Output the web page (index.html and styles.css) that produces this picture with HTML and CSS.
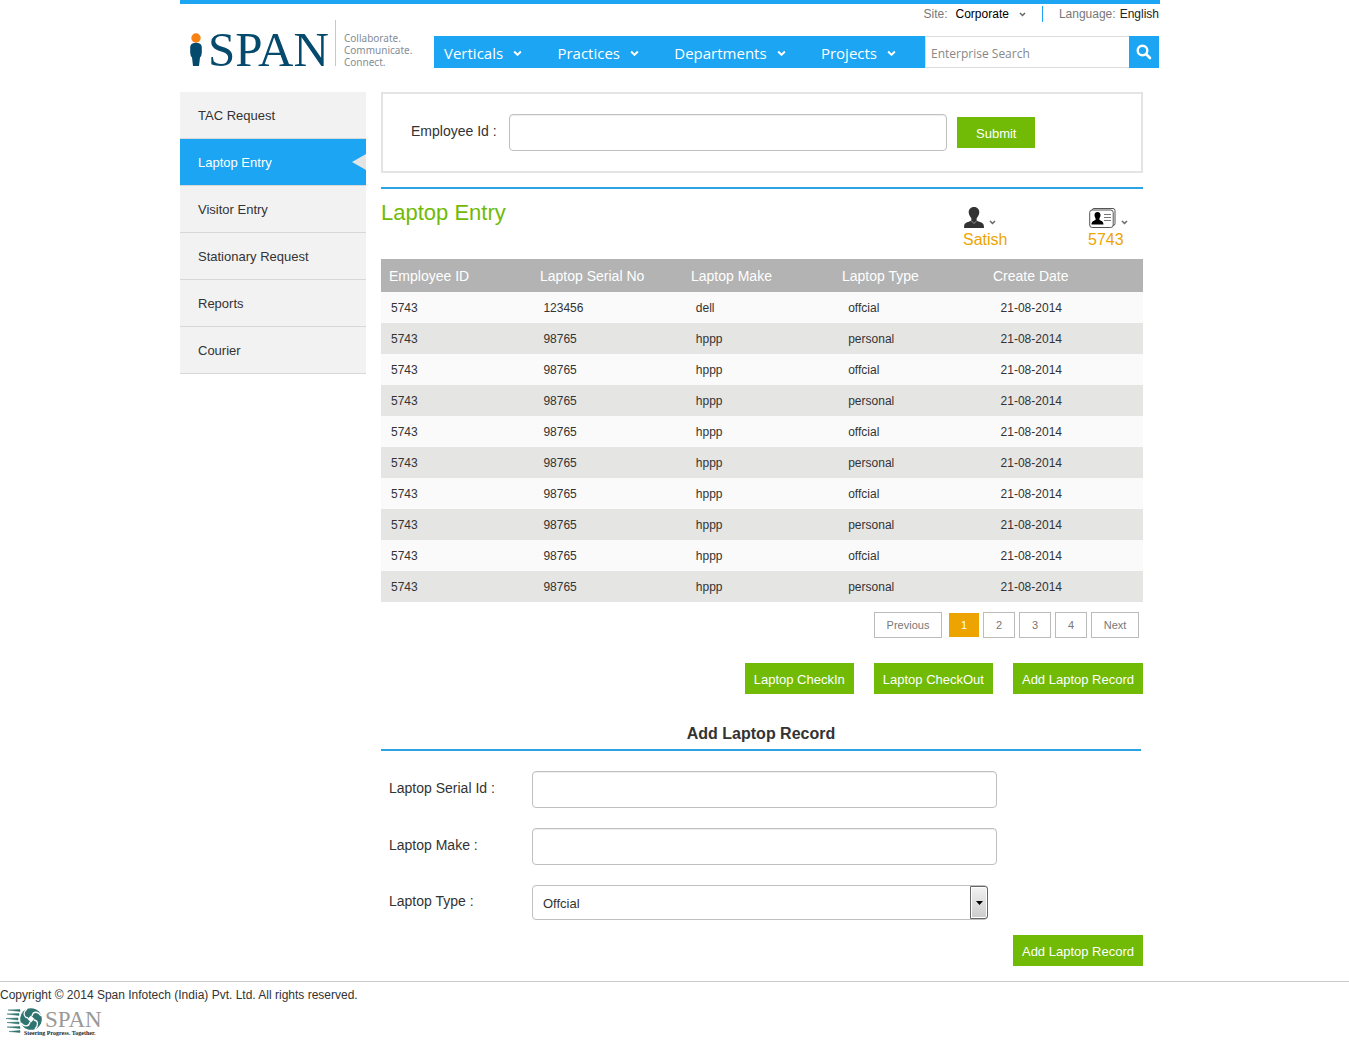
FILE: index.html
```html
<!DOCTYPE html>
<html lang="en">
<head>
<meta charset="utf-8">
<meta name="viewport" content="width=device-width, initial-scale=1">
<title>Laptop Entry</title>
<link rel="stylesheet" href="styles.css">
</head>
<body>
<svg class="defs" aria-hidden="true">
  <symbol id="caret" viewBox="0 0 8 6"><path d="M1 1.2 4 4.2 7 1.2" fill="none" stroke="currentColor" stroke-width="1.800"/></symbol>
</svg>
<div class="page">
  <header class="header">
    <a class="brand" href="#">
      <svg class="brand-man" viewBox="0 0 12 34" aria-hidden="true">
        <circle cx="6" cy="5" r="4.7" fill="#f98012"/>
        <path d="M3 10.300Q6 9 9 10.300Q12 11.500 11.800 15V20Q11.600 23 10 24.500L9 33H3L2 24.500Q.4 23 .2 20V15Q0 11.500 3 10.300Z" fill="#05496d"/>
      </svg>
      <span class="brand-name">SPAN</span>
      <span class="brand-motto">Collaborate.<br>Communicate.<br>Connect.</span>
    </a>
    <div class="header-main">
      <div class="settings">
        <span>Site:</span>
        <button class="site" type="button">Corporate <svg class="caret-small"><use href="#caret"/></svg></button>
        <span class="language">Language: <a href="#">English</a></span>
      </div>
      <div class="bar">
        <nav class="nav">
          <a href="#">Verticals <svg class="caret"><use href="#caret"/></svg></a>
          <a href="#">Practices <svg class="caret"><use href="#caret"/></svg></a>
          <a href="#">Departments <svg class="caret"><use href="#caret"/></svg></a>
          <a href="#">Projects <svg class="caret"><use href="#caret"/></svg></a>
        </nav>
        <form class="search">
          <input type="text" placeholder="Enterprise Search" aria-label="Enterprise Search">
          <button type="button" aria-label="Search"><svg viewBox="0 0 16 16"><circle cx="6.500" cy="6.500" r="4.800" fill="none" stroke="#fff" stroke-width="2.400"/><path d="m10 10 4 4" stroke="#fff" stroke-width="2.600" stroke-linecap="round"/></svg></button>
        </form>
      </div>
    </div>
  </header>

  <div class="columns">
    <nav class="side">
      <a href="#">TAC Request</a>
      <a href="#" class="active" aria-current="page">Laptop Entry</a>
      <a href="#">Visitor Entry</a>
      <a href="#">Stationary Request</a>
      <a href="#">Reports</a>
      <a href="#">Courier</a>
    </nav>

    <main class="main">
      <form class="lookup">
        <label for="employee">Employee Id :</label>
        <input id="employee" class="field" type="text">
        <button class="btn btn-wide" type="button">Submit</button>
      </form>

      <section class="title-row">
        <h1>Laptop Entry</h1>
        <a class="who" href="#">
          <span class="who-icon">
            <svg width="22" height="22" viewBox="0 0 22 22"><path d="M11 0C14.500 0 16.500 2.500 16.300 5.800C16 8.500 14.500 10 13.600 11.500V13.500C16 15 20.500 15.300 20.800 18.500L21 21H1L1.200 18.500C1.500 15.300 6 15 8.400 13.500V11.500C7.500 10 6 8.500 5.700 5.800C5.500 2.500 7.500 0 11 0Z" fill="#333"/><path d="m8.500 14 2.500 2.500 2.500-2.500" fill="none" stroke="#aaa" stroke-width=".8"/></svg>
            <svg class="caret-small"><use href="#caret"/></svg>
          </span>
          Satish
        </a>
        <a class="who" href="#">
          <span class="who-icon">
            <svg width="29" height="22" viewBox="0 0 29 22"><rect x="4" y="1.500" width="23" height="17" rx="2" fill="#fff" stroke="#555"/><rect x="1.700" y="3" width="23.500" height="17.500" rx="2.500" fill="#fff" stroke="#555"/><path d="M9.500 5C11.500 5 12.700 6.300 12.500 8.500C12.300 10.300 11.300 11 11.300 12.500C12 14 15.500 13.500 15.500 17.500H3.500C3.500 13.500 7 14 7.700 12.500C7.700 11 6.700 10.300 6.500 8.500C6.300 6.300 7.500 5 9.500 5Z" fill="#000"/><path d="M16 7.500h7M16 10.500h7M16 13.500h7" stroke="#777"/></svg>
            <svg class="caret-small"><use href="#caret"/></svg>
          </span>
          5743
        </a>
      </section>

      <table class="records">
        <thead><tr><th>Employee ID</th><th>Laptop Serial No</th><th>Laptop Make</th><th>Laptop Type</th><th>Create Date</th></tr></thead>
        <tbody>
          <tr><td>5743</td><td>123456</td><td>dell</td><td>offcial</td><td>21-08-2014</td></tr>
          <tr><td>5743</td><td>98765</td><td>hppp</td><td>personal</td><td>21-08-2014</td></tr>
          <tr><td>5743</td><td>98765</td><td>hppp</td><td>offcial</td><td>21-08-2014</td></tr>
          <tr><td>5743</td><td>98765</td><td>hppp</td><td>personal</td><td>21-08-2014</td></tr>
          <tr><td>5743</td><td>98765</td><td>hppp</td><td>offcial</td><td>21-08-2014</td></tr>
          <tr><td>5743</td><td>98765</td><td>hppp</td><td>personal</td><td>21-08-2014</td></tr>
          <tr><td>5743</td><td>98765</td><td>hppp</td><td>offcial</td><td>21-08-2014</td></tr>
          <tr><td>5743</td><td>98765</td><td>hppp</td><td>personal</td><td>21-08-2014</td></tr>
          <tr><td>5743</td><td>98765</td><td>hppp</td><td>offcial</td><td>21-08-2014</td></tr>
          <tr><td>5743</td><td>98765</td><td>hppp</td><td>personal</td><td>21-08-2014</td></tr>
        </tbody>
      </table>

      <nav class="pager" aria-label="Pages">
        <a class="prev" href="#">Previous</a>
        <a class="current" href="#" aria-current="page">1</a>
        <a href="#">2</a>
        <a href="#">3</a>
        <a href="#">4</a>
        <a class="next" href="#">Next</a>
      </nav>

      <div class="actions">
        <button class="btn" type="button">Laptop CheckIn</button>
        <button class="btn" type="button">Laptop CheckOut</button>
        <button class="btn" type="button">Add Laptop Record</button>
      </div>

      <form class="record-form">
        <h2>Add Laptop Record</h2>
        <div class="form-row">
          <label for="serial">Laptop Serial Id :</label>
          <input id="serial" class="field" type="text">
        </div>
        <div class="form-row">
          <label for="make">Laptop Make :</label>
          <input id="make" class="field" type="text">
        </div>
        <div class="form-row">
          <label for="type">Laptop Type :</label>
          <span class="select">
            <select id="type"><option>Offcial</option><option>Personal</option></select>
            <span class="select-button"><svg viewBox="0 0 7 4" width="7" height="4"><path d="M0 0h7L3.500 4Z"/></svg></span>
          </span>
        </div>
        <div class="form-end"><button class="btn" type="button">Add Laptop Record</button></div>
      </form>
    </main>
  </div>
</div>

<footer class="footer">
  <p>Copyright © 2014 Span Infotech (India) Pvt. Ltd. All rights reserved.</p>
  <svg class="footer-logo" width="100" height="32" viewBox="0 0 100 32" role="img" aria-label="SPAN">
    <path d="M3 4 15 3.500V5.500ZM2 8 14 7.500V9.500ZM1 12.500 13 12V14ZM2 16.500 14 16V18ZM2 21 15 20.500V22.500ZM4 25.500 15 24.500V26.500Z" fill="#2f7470" stroke="#2f7470" stroke-width=".5"/>
    <circle cx="26" cy="13" r="10.800" fill="#2f7470"/>
    <path d="M23 12C18 11 18 6 22 3M27 10C28 5 33 5 36 10M29 14C34 15 33 20 30 23M25 16C24 21 19 21 16 17" fill="none" stroke="#fff" stroke-width="1.300"/>
    <path d="m26 9.500 3.500 3.500-3.500 3.500-3.500-3.500Z" fill="#fff"/>
    <text class="footer-name" x="40" y="21">SPAN</text>
    <text class="footer-motto" x="19" y="29">Steering Progress. Together.</text>
  </svg>
</footer>
</body>
</html>
```
FILE: styles.css
```css
* { box-sizing: border-box; }

body {
  margin: 0;
  background: #fff;
  color: #333;
  font-family: "Liberation Sans", Arial, sans-serif;
  font-size: 13px;
  line-height: 16px;
}

a { color: inherit; text-decoration: none; }
button, input, select { font: inherit; color: inherit; margin: 0; }
button { border: 0; padding: 0; background: none; cursor: pointer; }
h1, h2, p { margin: 0; font-weight: normal; }
.defs { position: absolute; width: 0; height: 0; }

.page { padding-right: 9px; }
.header, .columns { max-width: 980px; margin: 0 auto; }

/* Header */
.header { display: flex; border-top: 4px solid #1ba5f2; padding-right: 1px; }
.brand { display: flex; flex: 0 0 254px; padding: 16px 0 0 10px; height: 64px; }
.brand-man { width: 12px; height: 34px; margin: 13px 6px 0 0; }
.brand-name { color: #05496d; font: 49px/60px "Liberation Serif", serif; width: 127px; }
.brand-motto {
  height: 46px;
  padding: 12px 0 0 8px;
  border-left: 1px solid #c4c8cc;
  color: #858d96;
  font: 10px/12px "Noto Sans", sans-serif;
}
.header-main { flex: 1; min-width: 0; }
.settings {
  display: flex;
  justify-content: flex-end;
  align-items: center;
  height: 32px;
  padding-bottom: 12px;
  color: #777;
  font-size: 12px;
}
.site { display: flex; align-items: center; gap: 10px; margin: 0 16px 0 8px; color: #000; }
.language { display: flex; gap: 4px; border-left: 1px solid #1ba5f2; padding-left: 16px; }
.language a { color: #222; }
.caret { width: 9px; height: 7px; }
.caret-small { width: 7px; height: 5px; color: #666; }
.bar { display: flex; height: 32px; }
.nav {
  display: flex;
  flex: 0 0 491px;
  justify-content: space-between;
  padding: 2px 29px 0 10px;
  background: #1ba5f2;
  color: #fff;
  font: 15px/30px "Open Sans", sans-serif;
}
.nav a { display: flex; align-items: center; gap: 10px; }
.search { display: flex; flex: 1; min-width: 0; }
.search input {
  flex: 1;
  min-width: 0;
  padding: 3px 5px 0;
  border: 1px solid #ddd;
  border-width: 1px 0 1px 1px;
  font: 12px/16px "Open Sans", sans-serif;
}
.search input::placeholder { color: #888; opacity: 1; }
.search button { flex: 0 0 30px; display: grid; place-items: center; background: #1ba5f2; }
.search svg { width: 16px; height: 16px; }

/* Columns */
.columns { display: flex; align-items: flex-start; gap: 15px; padding: 24px 17px 15px 0; }
.side { flex: 0 0 186px; }
.side a {
  position: relative;
  display: block;
  padding: 16px 18px 14px;
  background: #f2f2f2;
  border-bottom: 1px solid #d8d8d8;
}
.side .active { background: #1ba5f2; color: #fff; }
.side .active::after {
  content: "";
  position: absolute;
  right: 0;
  top: 15px;
  border: 8px solid transparent;
  border-width: 8px 14px 8px 0;
  border-right-color: #e4e4e4;
}
.main { flex: 1; min-width: 0; }

.field {
  height: 37px;
  padding: 0 10px;
  border: 1px solid #c0c0c0;
  border-radius: 4px;
  background: #fff;
  box-shadow: inset 0 1px 1px #eee;
}
.btn { height: 31px; padding: 2px 9px 0; background: #71ba06; color: #fff; }
.btn-wide { padding: 2px 19px 0; }
label { font-size: 14px; }

.lookup {
  display: flex;
  align-items: center;
  border: 2px solid #e4e4e4;
  padding: 20px 28px;
  margin-bottom: 14px;
}
.lookup label { flex: 0 0 98px; padding-bottom: 4px; }
.lookup .field { flex: 0 1 438px; min-width: 0; margin-right: 10px; }

.title-row {
  display: flex;
  height: 72px;
  border-top: 2px solid #2ba3e3;
}
.title-row h1 { flex: 1; color: #71ba06; font-size: 22px; line-height: 26px; padding-top: 11px; }
.who { width: 125px; padding-top: 18px; color: #eda400; font-size: 16px; }
.who:last-child { width: 55px; }
.who-icon { display: flex; align-items: flex-end; gap: 4px; height: 22px; margin-bottom: 3px; }
.who-icon .caret-small { margin-bottom: 4px; }

/* Records */
.records { display: block; }
.records thead, .records tbody { display: block; }
.records tr { display: grid; grid-template-columns: repeat(5, 1fr); }
.records thead tr { padding-right: 7px; background: #b3b3b3; color: #fff; font-size: 14px; }
.records th { padding: 1px 8px 0; line-height: 32px; text-align: left; font-weight: normal; white-space: nowrap; }
.records td { padding: 1px 10px 0; font-size: 12px; line-height: 30px; }
.records tbody tr { background: #fafafa; }
.records tbody tr:nth-child(even) { background: #e5e5e4; }

.pager { display: flex; justify-content: flex-end; align-items: center; gap: 4px; padding: 10px 4px 0 0; }
.pager a {
  width: 32px;
  border: 1px solid #bbb;
  color: #777;
  font-size: 11px;
  line-height: 24px;
  text-align: center;
}
.pager .prev { width: 68px; margin-right: 3px; }
.pager .next { width: 48px; }
.pager .current { width: 30px; border: 0; background: #eda400; color: #fff; }

.actions { display: flex; justify-content: flex-end; gap: 20px; padding: 25px 0; }

/* New record */
.record-form { display: grid; gap: 20px; }
.record-form h2 {
  margin-right: 2px;
  padding: 5px 0;
  border-bottom: 2px solid #2ba3e3;
  font-size: 16px;
  line-height: 20px;
  font-weight: bold;
  text-align: center;
}
.form-row { display: flex; align-items: center; padding-left: 8px; }
.form-row label { flex: 0 0 143px; padding-bottom: 3px; }
.form-row .field { flex: 0 1 465px; min-width: 0; }
.select { position: relative; flex: 0 1 456px; }
.select select {
  display: block;
  width: 100%;
  height: 35px;
  padding: 2px 10px 0;
  appearance: none;
  border: 1px solid #c0c0c0;
  border-radius: 4px;
  background: #fff;
}
.select-button {
  position: absolute;
  top: 1px;
  right: 0;
  bottom: 1px;
  width: 18px;
  display: grid;
  place-items: center;
  border: 1px solid #666;
  border-radius: 0 3px 3px 0;
  background: linear-gradient(#f2f2f2, #ccc);
  box-shadow: inset 0 0 0 1px #fff;
  pointer-events: none;
}
.form-end { display: flex; justify-content: flex-end; margin-top: -5px; }

/* Footer */
.footer { border-top: 1px solid #ccc; padding-top: 5px; font-size: 12px; }
.footer-logo { display: block; margin: 3px 0 0 5px; }
.footer-name { font: 23px "Liberation Serif", serif; fill: #999; }
.footer-motto { font: bold 6px "Liberation Serif", serif; fill: #222; }
```
